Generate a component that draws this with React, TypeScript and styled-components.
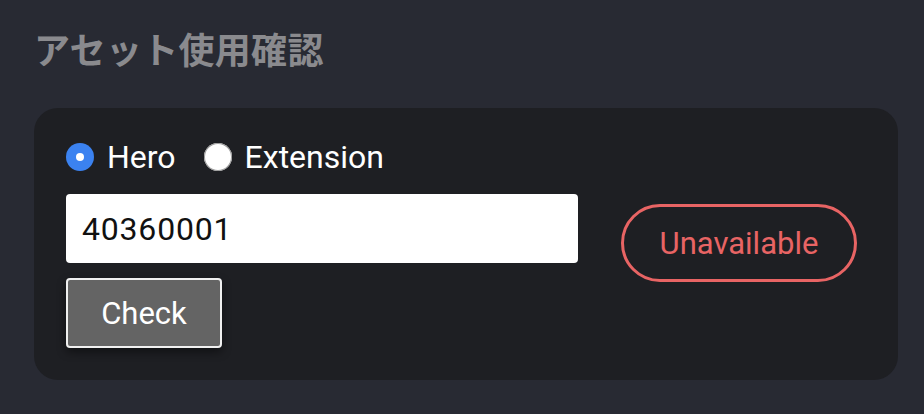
import React, { useState } from "react";
import styled, { createGlobalStyle } from "styled-components";

const Global = createGlobalStyle`
  html, body { margin: 0; padding: 0; background: #282a33; }
  body { font-family: Roboto, "Noto Sans CJK JP", sans-serif; }
`;

const Page = styled.div`
  width: 924px;
  height: 414px;
  box-sizing: border-box;
  padding: 26px 26px 0 34px;
  background: #282a33;
  overflow: hidden;
`;

const Title = styled.h1`
  margin: 0;
  height: 82px;
  font-family: "Noto Sans CJK JP", sans-serif;
  font-size: 36px;
  line-height: 44px;
  font-weight: 700;
  letter-spacing: 0.3px;
  color: #8a8a8e;
`;

const Card = styled.div`
  width: 864px;
  height: 272px;
  box-sizing: border-box;
  background: #1e1f23;
  border-radius: 24px;
  padding: 34px 41px 0 32px;
  display: flex;
  justify-content: space-between;
  align-items: flex-start;
`;

const Left = styled.div`
  display: flex;
  flex-direction: column;
`;

const RadioRow = styled.div`
  display: flex;
  align-items: center;
  height: 30px;
  margin-bottom: 22px;
`;

const RadioLabel = styled.label`
  display: flex;
  align-items: center;
  font-family: Roboto, sans-serif;
  font-size: 32px;
  color: #ffffff;
  margin-right: 28px;
  cursor: pointer;
`;

const Dot = styled.span<{ $on: boolean }>`
  width: 28px;
  height: 28px;
  border-radius: 50%;
  box-sizing: border-box;
  background: ${(p) => (p.$on ? "#3b82f0" : "#ffffff")};
  box-shadow: ${(p) => (p.$on ? "none" : "inset 0 0 0 1px #9a9a9a")};
  display: flex;
  align-items: center;
  justify-content: center;
  margin-right: 13px;
  &::after {
    content: "";
    width: 8px;
    height: 8px;
    border-radius: 50%;
    background: #ffffff;
    display: ${(p) => (p.$on ? "block" : "none")};
  }
`;

const Input = styled.input`
  width: 512px;
  height: 69px;
  box-sizing: border-box;
  border: none;
  border-radius: 4px;
  background: #ffffff;
  padding: 0 16px;
  font-family: Roboto, sans-serif;
  font-size: 32px;
  letter-spacing: 0.8px;
  color: #111111;
  outline: none;
  margin-bottom: 15px;
`;

const Button = styled.button`
  width: 156px;
  height: 70px;
  box-sizing: border-box;
  background: #646464;
  border: 2px solid #f0f0f0;
  border-radius: 4px;
  color: #ffffff;
  font-family: Roboto, sans-serif;
  font-size: 31px;
  box-shadow: 0 4px 10px rgba(0, 0, 0, 0.45);
  cursor: pointer;
`;

const Status = styled.div`
  margin-top: 62px;
  width: 236px;
  height: 78px;
  box-sizing: border-box;
  border: 3px solid #e86464;
  border-radius: 40px;
  display: flex;
  align-items: center;
  justify-content: center;
  font-family: Roboto, sans-serif;
  font-size: 31px;
  color: #e86464;
`;

export default function App() {
  const [kind, setKind] = useState("hero");
  return (
    <Page>
      <Global />
      <Title>アセット使用確認</Title>
      <Card>
        <Left>
          <RadioRow>
            <RadioLabel onClick={() => setKind("hero")}>
              <Dot $on={kind === "hero"} />
              Hero
            </RadioLabel>
            <RadioLabel onClick={() => setKind("ext")}>
              <Dot $on={kind === "ext"} />
              Extension
            </RadioLabel>
          </RadioRow>
          <Input defaultValue="40360001" />
          <Button>Check</Button>
        </Left>
        <Status>Unavailable</Status>
      </Card>
    </Page>
  );
}
